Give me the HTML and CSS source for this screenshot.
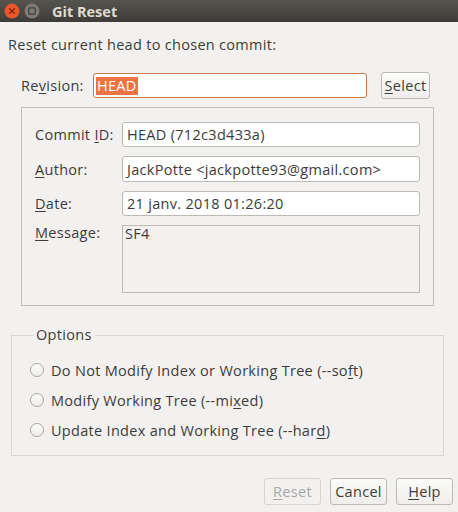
FILE: index.html
```html
<!DOCTYPE html>
<html>
<head>
<meta charset="utf-8">
<link rel="stylesheet" href="styles.css">
</head>
<body>
<div class="window">
  <div class="titlebar">
    <span class="wbtn close"><svg width="16" height="16" viewBox="0 0 16 16"><circle cx="8" cy="8" r="7.5" fill="#e9562c"/><path d="M5.6 5.6 L10.4 10.4 M10.4 5.6 L5.6 10.4" stroke="#7a1f0a" stroke-width="1.3" stroke-linecap="round"/></svg></span>
    <span class="wbtn min"><svg width="16" height="16" viewBox="0 0 16 16"><circle cx="8" cy="8" r="7.5" fill="#7d7b75"/><rect x="4.8" y="4.8" width="6.4" height="6.4" rx="1" fill="none" stroke="#3f3e3a" stroke-width="1.2"/></svg></span>
    <span class="title">Git Reset</span>
  </div>
  <div class="content">
    <p class="intro">Reset current head to chosen commit:</p>
    <div class="rev-row">
      <label class="rev-label"><span>Re<u>v</u>ision:</span></label>
      <div class="rev-input"><span class="sel">HEAD</span></div>
      <button class="btn select"><u>S</u>elect</button>
    </div>
    <div class="panel">
      <label class="flabel"><span>Commit <u>I</u>D:</span></label>
      <div class="field"><span>HEAD (712c3d433a)</span></div>
      <label class="flabel"><span><u>A</u>uthor:</span></label>
      <div class="field"><span>JackPotte &lt;jackpotte93@gmail.com&gt;</span></div>
      <label class="flabel"><span><u>D</u>ate:</span></label>
      <div class="field"><span>21 janv. 2018 01:26:20</span></div>
      <label class="flabel top"><span><u>M</u>essage:</span></label>
      <div class="msg">SF4</div>
    </div>
    <fieldset class="options">
      <legend>Options</legend>
      <div class="radio"><span class="circle"></span><span>Do Not Modify Index or Working Tree (--so<u>f</u>t)</span></div>
      <div class="radio"><span class="circle"></span><span>Modify Working Tree (--mi<u>x</u>ed)</span></div>
      <div class="radio"><span class="circle"></span><span>Update Index and Working Tree (--har<u>d</u>)</span></div>
    </fieldset>
    <div class="actions">
      <button class="btn act disabled"><u>R</u>eset</button>
      <button class="btn act">Cancel</button>
      <button class="btn act"><u>H</u>elp</button>
    </div>
  </div>
</div>
</body>
</html>
```
FILE: styles.css
```css
* { box-sizing: border-box; }
html, body { margin: 0; padding: 0; }
body {
  width: 458px;
  height: 512px;
  background: #f2f1f0;
  font-family: "Open Sans", "DejaVu Sans", sans-serif;
  font-size: 14.5px;
  letter-spacing: 0.3px;
  color: #3c3c3c;
  overflow: hidden;
}
u { text-decoration: underline; text-decoration-thickness: 1px; text-underline-offset: 2px; }
.titlebar {
  height: 22px;
  background: linear-gradient(#56544e, #3d3c38);
  display: flex;
  align-items: center;
  padding-left: 4px;
}
.wbtn { width: 16px; height: 16px; display: block; }
.wbtn svg { display: block; }
.min { margin-left: 4px; }
.title {
  margin-left: 12px;
  color: #dfdbd2;
  font-weight: bold;
  font-size: 14.5px;
  letter-spacing: 0;
}
.content { padding: 0 5px 0 0; }
.intro {
  margin: 14px 0 0 8px;
  line-height: 18px;
}
.rev-row {
  display: flex;
  align-items: center;
  margin-top: 18px;
  height: 27px;
}
.rev-label { margin-left: 21px; width: 72px; }
.rev-input {
  width: 274px;
  height: 25px;
  border: 1px solid #c77a45;
  border-radius: 3px;
  background: #fff;
  display: flex;
  align-items: center;
  padding-left: 2px;
}
.sel {
  background: #ee7344;
  color: #fff;
  line-height: 18px;
  padding: 0 1px;
}
.btn {
  font-family: inherit;
  font-size: 14.5px;
  letter-spacing: 0.3px;
  color: #3c3c3c;
  background: linear-gradient(#fbfbfa, #efeeec);
  border: 1px solid #bcbab5;
  border-radius: 3px;
  height: 27px;
  padding: 0;
}
.select { margin-left: 14px; width: 49px; }
.panel {
  margin: 8px 0 0 21px;
  width: 413px;
  height: 199px;
  border: 1px solid #c1bfba;
  padding: 14px 13px 12px 13px;
  display: grid;
  grid-template-columns: 87px 298px;
  grid-template-rows: 25px 26px 25px 1fr;
  row-gap: 9px;
}
.flabel { display: flex; align-items: center; }
.flabel.top { align-items: flex-start; line-height: 16px; }
.field {
  background: #fff;
  border: 1px solid #bcbab5;
  border-radius: 3px;
  display: flex;
  align-items: center;
  padding-left: 4px;
}
.msg {
  border: 1px solid #bcbab5;
  padding: 0 2px;
  line-height: 16px;
}
.options {
  margin: 20px 0 0 11px;
  width: 433px;
  height: 130px;
  border: 1px solid #d9d7d3;
  border-radius: 0;
  padding: 11px 0 0 18px;
}
.options legend {
  padding: 0 3px 0 2px;
  margin-left: 4px;
  line-height: 18px;
}
.radio {
  display: flex;
  align-items: center;
  height: 30px;
}
.circle {
  width: 14px;
  height: 14px;
  border: 1px solid #a9a7a2;
  border-radius: 50%;
  background: linear-gradient(#fcfcfb, #eeedeb);
  margin-right: 7px;
}
.actions {
  display: flex;
  justify-content: flex-end;
  gap: 9px;
  margin-top: 22px;
}
.act { width: 57px; }
.disabled { color: #a9a7a3; border-color: #d6d4d0; background: #f2f1f0; }
```
